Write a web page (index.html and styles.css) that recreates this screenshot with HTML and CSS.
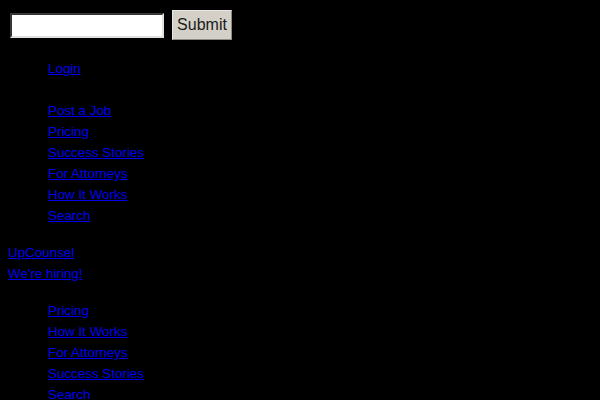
FILE: index.html
```html
<!DOCTYPE html>
<html>
<head>
<meta charset="utf-8">
<link rel="stylesheet" href="styles.css">
</head>
<body>
<form class="search">
  <input class="search-input" type="text">
  <button class="search-btn" type="button">Submit</button>
</form>
<ul class="nav nav-login">
  <li><a href="#">Login</a></li>
</ul>
<ul class="nav">
  <li><a href="#">Post a Job</a></li>
  <li><a href="#">Pricing</a></li>
  <li><a href="#">Success Stories</a></li>
  <li><a href="#">For Attorneys</a></li>
  <li><a href="#">How It Works</a></li>
  <li><a href="#">Search</a></li>
</ul>
<div class="brand">
  <div><a href="#">UpCounsel</a></div>
  <div><a href="#">We're hiring!</a></div>
</div>
<ul class="nav">
  <li><a href="#">Pricing</a></li>
  <li><a href="#">How It Works</a></li>
  <li><a href="#">For Attorneys</a></li>
  <li><a href="#">Success Stories</a></li>
  <li><a href="#">Search</a></li>
</ul>
</body>
</html>
```

FILE: styles.css
```css
html, body {
  background: #000;
}
body {
  margin: 8px;
  font-family: "Liberation Sans", Arial, sans-serif;
  font-size: 13.4px;
  line-height: 21px;
  color: #fff;
}
a {
  color: #0000ee;
  text-decoration: underline;
}
.search {
  display: flex;
  align-items: center;
  gap: 8px;
  padding: 2px;
  margin: 0 0 3px;
}
.search-input {
  box-sizing: border-box;
  width: 154px;
  height: 25px;
  margin: 0;
  background: #fff;
  border: 2px inset #d8d8d8;
  border-color: #8a8a8a #e0e0e0 #e0e0e0 #8a8a8a;
}
.search-btn {
  box-sizing: border-box;
  height: 30px;
  width: 60px;
  margin: 0;
  padding: 0;
  background: #d4d0c8;
  border: 1px solid #e8e6e0;
  border-right-color: #8c8a84;
  border-bottom-color: #8c8a84;
  font-family: "Liberation Sans", Arial, sans-serif;
  font-size: 16px;
  color: #1a1a1a;
}
.nav {
  list-style: none;
  margin: 16px 0;
  padding: 0 0 0 40px;
}
.nav-login {
  margin-bottom: 21px;
}
.brand {
  margin: 16px 0;
}
```
